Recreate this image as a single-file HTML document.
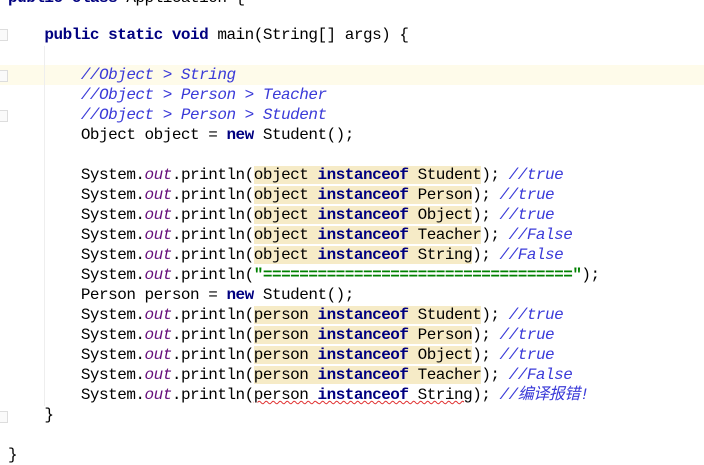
<!DOCTYPE html>
<html><head><style>
body{margin:0;width:704px;height:459px;background:#fff;overflow:hidden;position:relative;font-family:"Liberation Mono","Noto Sans CJK SC",monospace;font-size:16px;letter-spacing:-0.5px;}
.l{position:absolute;left:8px;height:20px;line-height:20px;white-space:pre;color:#000;}
.k{color:#000080;font-weight:bold}
.c{color:#3a3ad8;font-style:italic}
.o{color:#660e7a;font-style:italic}
.s{color:#008000;font-weight:bold}
.h{background:#f6ebc7}
.e{text-decoration:underline wavy #e03030;text-decoration-thickness:1px}
.cur{position:absolute;left:0;top:65px;width:704px;height:20px;background:#fefbea}
.g{position:absolute;left:0;width:7px;height:10px;border:1px solid #ddd;border-left:none;background:#fafafa}
.vl{position:absolute;left:44px;top:46px;width:1px;height:360px;background:#eee}
</style></head><body>
<div class="cur"></div>
<div class="vl"></div>
<div class="g" style="top:29px"></div>
<div class="g" style="top:70px"></div>
<div class="g" style="top:110px"></div>
<div class="g" style="top:411px"></div>
<div class="l" style="top:-12px"><span class="k">public class</span> Application {</div>
<div class="l" style="top:25px">    <span class="k">public static void</span> main(String[] args) {</div>
<div class="l" style="top:65px">        <span class="c">//Object &gt; String</span></div>
<div class="l" style="top:85px">        <span class="c">//Object &gt; Person &gt; Teacher</span></div>
<div class="l" style="top:105px">        <span class="c">//Object &gt; Person &gt; Student</span></div>
<div class="l" style="top:125px">        Object object = <span class="k">new</span> Student();</div>
<div class="l" style="top:165px">        System.<span class="o">out</span>.println(<span class="h">object <span class="k">instanceof</span> Student</span>); <span class="c">//true</span></div>
<div class="l" style="top:185px">        System.<span class="o">out</span>.println(<span class="h">object <span class="k">instanceof</span> Person</span>); <span class="c">//true</span></div>
<div class="l" style="top:205px">        System.<span class="o">out</span>.println(<span class="h">object <span class="k">instanceof</span> Object</span>); <span class="c">//true</span></div>
<div class="l" style="top:225px">        System.<span class="o">out</span>.println(<span class="h">object <span class="k">instanceof</span> Teacher</span>); <span class="c">//False</span></div>
<div class="l" style="top:245px">        System.<span class="o">out</span>.println(<span class="h">object <span class="k">instanceof</span> String</span>); <span class="c">//False</span></div>
<div class="l" style="top:265px">        System.<span class="o">out</span>.println(<span class="s">"=================================="</span>);</div>
<div class="l" style="top:285px">        Person person = <span class="k">new</span> Student();</div>
<div class="l" style="top:305px">        System.<span class="o">out</span>.println(<span class="h">person <span class="k">instanceof</span> Student</span>); <span class="c">//true</span></div>
<div class="l" style="top:325px">        System.<span class="o">out</span>.println(<span class="h">person <span class="k">instanceof</span> Person</span>); <span class="c">//true</span></div>
<div class="l" style="top:345px">        System.<span class="o">out</span>.println(<span class="h">person <span class="k">instanceof</span> Object</span>); <span class="c">//true</span></div>
<div class="l" style="top:365px">        System.<span class="o">out</span>.println(<span class="h">person <span class="k">instanceof</span> Teacher</span>); <span class="c">//False</span></div>
<div class="l" style="top:385px">        System.<span class="o">out</span>.println(<span class="e">person <span class="k">instanceof</span> String</span>); <span class="c">//编译报错!</span></div>
<div class="l" style="top:405px">    }</div>
<div class="l" style="top:445px">}</div>
</body></html>
